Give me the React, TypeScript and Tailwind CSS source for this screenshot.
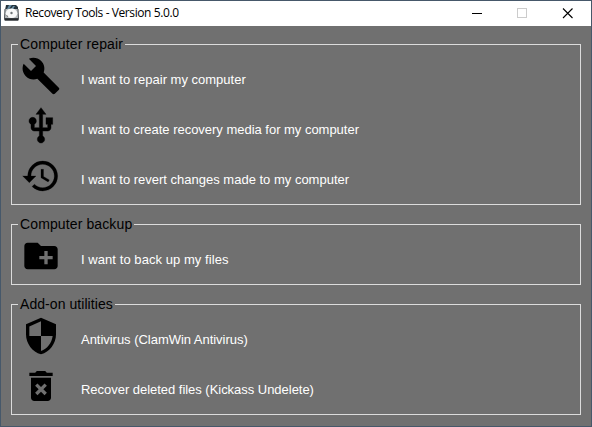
import type { ReactNode } from 'react';
import { MdBuild, MdCreateNewFolder, MdSecurity, MdDeleteForever } from 'react-icons/md';

function DriveIcon() {
  return (
    <svg className="block h-4 w-4" viewBox="0 0 16 16">
      <path d="M2 0h10l2 2v3H1z" fill="#24323c" />
      <path d="M5 0h3l-3 4H3zM9 1h2L9 4H7z" fill="#668ca3" />
      <path d="M.5 4L0 14l.5 1.5h14l.5-1.5-.5-10z" fill="#4a4f53" />
      <path d="M1.5 4h12l.5 9H1z" fill="#b5babd" />
      <ellipse cx="7.5" cy="8.3" rx="5.8" ry="4.8" fill="#f7f8f8" />
      <circle cx="7.5" cy="8" r="1.2" fill="#6d7377" />
      <path d="M4 12l-1.5-2" stroke="#777" strokeWidth="1" />
      <path d="M1 13.5h13v2H1z" fill="#25292c" />
    </svg>
  );
}

function UsbIcon() {
  return (
    <svg className="h-10 w-10" viewBox="0 0 24 24" fill="currentColor" stroke="currentColor" strokeWidth="0.25">
      <path d="M15 7v4h1v2h-3V5h2l-3-4-3 4h2v8H8v-2.07c.7-.37 1.2-1.08 1.2-1.93 0-1.21-.99-2.2-2.2-2.2-1.21 0-2.2.99-2.2 2.2 0 .85.5 1.56 1.2 1.93V13c0 1.11.89 2 2 2h3v3.05c-.71.37-1.2 1.1-1.2 1.95 0 1.22.99 2.2 2.2 2.2 1.21 0 2.2-.98 2.2-2.2 0-.85-.49-1.58-1.2-1.95V15h3c1.11 0 2-.89 2-2v-2h1V7h-4z" />
    </svg>
  );
}

function HistoryIcon() {
  return (
    <svg className="h-10 w-10" viewBox="0 0 24 24" fill="currentColor" stroke="currentColor" strokeWidth="0.15">
      <path d="M13 3a9 9 0 0 0-9 9H1l3.89 3.89.07.14L9 12H6c0-3.87 3.13-7 7-7s7 3.13 7 7-3.13 7-7 7c-1.93 0-3.68-.79-4.94-2.06l-1.42 1.42A8.954 8.954 0 0 0 13 21a9 9 0 0 0 0-18zm-1 5v5l4.28 2.54.72-1.21-3.5-2.08V8H12z" />
    </svg>
  );
}

function Row({ icon, tracking = '', children }: { icon: ReactNode; tracking?: string; children: ReactNode }) {
  return (
    <button className="flex h-[50px] w-full items-start pl-[9px] text-left">
      <span className="text-[40px] text-black">{icon}</span>
      <span className={`ml-5 mt-[15px] whitespace-nowrap text-[13px] leading-[18px] text-white ${tracking}`}>{children}</span>
    </button>
  );
}

function Group({ title, className, tracking = 'tracking-[0.12px]', children }: { title: string; className: string; tracking?: string; children: ReactNode }) {
  return (
    <section className={`border border-[#dcdcdc] ${className}`}>
      <h2 className={`-mt-2.5 ml-1.5 flex h-[18px] w-fit items-center whitespace-nowrap bg-[#707070] px-0.5 text-[14px] leading-[18px] text-black ${tracking}`}>
        {title}
      </h2>
      <div className="mt-[3px]">{children}</div>
    </section>
  );
}

export default function App() {
  return (
    <div className="flex h-[427px] w-[592px] flex-col overflow-hidden border border-[#46586a] bg-[#707070] font-['Liberation_Sans',Arial,sans-serif]">
      <header className="flex h-[25px] shrink-0 items-center bg-white">
        <div className="-mt-px ml-[3px]"><DriveIcon /></div>
        <h1 className="-mt-px ml-[5px] flex-1 whitespace-nowrap font-['Open_Sans','Noto_Sans',sans-serif] text-[12px] leading-4 tracking-[-0.41px] text-black">Recovery Tools - Version 5.0.0</h1>
        <svg className="block h-[25px] w-[138px]" viewBox="0 0 138 25" fill="none" shapeRendering="crispEdges">
          <path d="M19 12.5h10" stroke="#000" />
          <path d="M64.5 7.5h9v9h-9z" stroke="#cccccc" />
          <path d="M110 7.5l9.5 9.5m0-9.5l-9.5 9.5" stroke="#000" shapeRendering="auto" strokeWidth="1.1" />
        </svg>
      </header>
      <main className="flex flex-col px-2.5 pt-[18px]">
        <Group title="Computer repair" className="h-[161px]">
          <Row icon={<MdBuild />}>I want to repair my computer</Row>
          <Row icon={<UsbIcon />} tracking="tracking-[-0.02px]">I want to create recovery media for my computer</Row>
          <Row icon={<HistoryIcon />}>I want to revert changes made to my computer</Row>
        </Group>
        <Group title="Computer backup" className="mt-[19px] h-[61px]">
          <Row icon={<MdCreateNewFolder />} tracking="tracking-[0.06px]">I want to back up my files</Row>
        </Group>
        <Group title="Add-on utilities" className="mt-[19px] h-[111px]" tracking="tracking-[0.06px]">
          <Row icon={<MdSecurity />} tracking="tracking-[-0.03px]">Antivirus (ClamWin Antivirus)</Row>
          <Row icon={<MdDeleteForever />} tracking="tracking-[-0.03px]">Recover deleted files (Kickass Undelete)</Row>
        </Group>
      </main>
    </div>
  );
}
